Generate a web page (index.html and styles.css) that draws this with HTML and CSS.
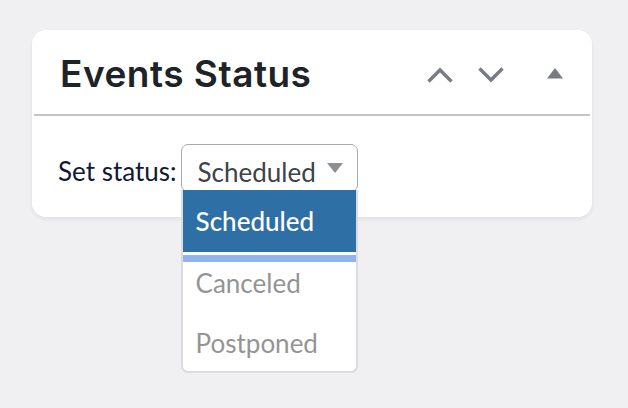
FILE: index.html
```html
<!DOCTYPE html>
<html>
<head>
<meta charset="utf-8">
<link rel="stylesheet" href="styles.css">
</head>
<body>
<div class="card">
  <div class="card-head">
    <h2 class="title">Events Status</h2>
    <div class="actions">
      <svg class="ico" width="28" height="18" viewBox="0 0 28 18"><path d="M2.5 15.5 L14 4 L25.5 15.5" fill="none" stroke="#787c82" stroke-width="3.4"/></svg>
      <svg class="ico" width="28" height="18" viewBox="0 0 28 18"><path d="M2.5 2.5 L14 14 L25.5 2.5" fill="none" stroke="#787c82" stroke-width="3.4"/></svg>
      <svg class="ico tri" width="18" height="12" viewBox="0 0 18 12"><path d="M1 11.5 L9 1 L17 11.5 Z" fill="#787c82"/></svg>
    </div>
  </div>
  <div class="divider"></div>
  <div class="card-body">
    <span class="label">Set status:</span>
    <div class="select-wrap">
      <div class="select">
        <span class="value">Scheduled</span>
        <svg class="caret" width="16" height="10" viewBox="0 0 16 10"><path d="M0 0 H16 L8 10 Z" fill="#8c8f94"/></svg>
      </div>
      <div class="menu">
        <div class="opt selected">Scheduled</div>
        <div class="focus-bar"></div>
        <div class="opt after-bar">Canceled</div>
        <div class="opt">Postponed</div>
      </div>
    </div>
  </div>
</div>
</body>
</html>
```

FILE: styles.css
```css
html, body {
  margin: 0;
  padding: 0;
}
body {
  background: #f0f0f2;
  width: 628px;
  height: 408px;
  overflow: hidden;
  font-family: Lato, "Open Sans", sans-serif;
}
.card {
  margin: 30px 0 0 32px;
  width: 560px;
  height: 187px;
  background: #fff;
  border-radius: 14px;
  box-shadow: 0 2px 4px rgba(0, 0, 0, 0.07);
}
.card-head {
  height: 84px;
  display: flex;
  align-items: center;
  justify-content: space-between;
  padding: 0 28px 0 28px;
}
.title {
  margin: 0;
  font-family: Inter, "Open Sans", sans-serif;
  font-weight: 600;
  font-size: 37px;
  letter-spacing: 0.5px;
  color: #1d2327;
  padding-top: 2px;
}
.actions {
  display: flex;
  align-items: center;
  gap: 23px;
  padding-top: 5px;
}
.ico {
  display: block;
}
.tri {
  margin-left: 18px;
  margin-top: -4px;
}
.divider {
  height: 2px;
  margin: 0 2px;
  background: #c3c4c7;
}
.card-body {
  display: flex;
  align-items: flex-start;
  padding: 28px 0 0 26px;
}
.label {
  font-size: 26px;
  color: #101832;
  margin-top: 11px;
  margin-right: 4px;
}
.select-wrap {
  position: relative;
}
.select {
  box-sizing: border-box;
  width: 177px;
  height: 48px;
  border: 1.5px solid #a7aaad;
  border-radius: 7px;
  display: flex;
  align-items: center;
  padding: 8px 14px 0 16px;
  justify-content: space-between;
}
.value {
  font-size: 26px;
  color: #3c434a;
}
.caret {
  margin-top: -8px;
}
.menu {
  position: absolute;
  left: 0;
  top: 46px;
  box-sizing: border-box;
  width: 177px;
  height: 183px;
  background: #fff;
  border: 2px solid #dcdcde;
  border-top: none;
  border-radius: 0 0 7px 7px;
}
.opt {
  height: 60px;
  display: flex;
  align-items: center;
  padding-left: 13px;
  font-size: 26px;
  color: #949494;
}
.opt.selected {
  background: #2e6fa5;
  color: #fff;
  height: 62px;
  font-weight: 500;
}
.opt.after-bar {
  box-sizing: border-box;
  height: 51px;
  padding-bottom: 9px;
}
.focus-bar {
  height: 7px;
  margin-top: 3px;
  background: #90b4f0;
}
```
